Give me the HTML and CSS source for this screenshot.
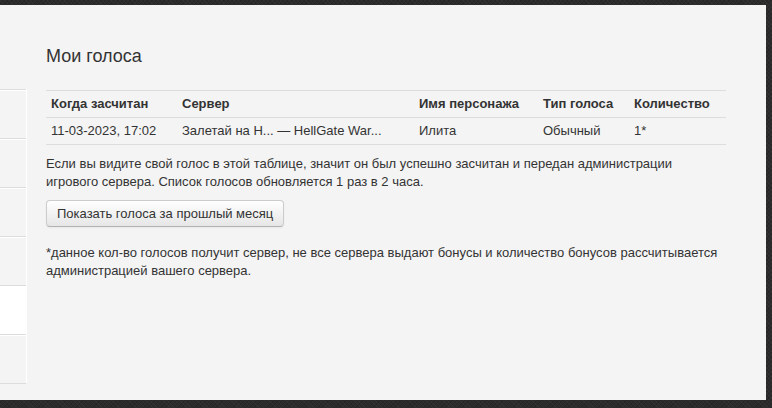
FILE: index.html
```html
<!DOCTYPE html>
<html lang="ru">
<head>
    <meta charset="UTF-8">
    <meta name="viewport" content="width=device-width, initial-scale=1.0">
    <title>Мои голоса</title>
    <link rel="stylesheet" href="styles.css">
</head>
<body>
    <div class="panel">
        <aside class="sidebar">
            <div class="side-item"></div>
            <div class="side-item"></div>
            <div class="side-item"></div>
            <div class="side-item"></div>
            <div class="side-item active"></div>
            <div class="side-item"></div>
        </aside>

        <main class="content">
            <h1>Мои голоса</h1>

            <table class="votes">
                <colgroup>
                    <col class="col-date">
                    <col class="col-server">
                    <col class="col-name">
                    <col class="col-type">
                    <col class="col-count">
                </colgroup>
                <thead>
                    <tr>
                        <th>Когда засчитан</th>
                        <th>Сервер</th>
                        <th>Имя персонажа</th>
                        <th>Тип голоса</th>
                        <th>Количество</th>
                    </tr>
                </thead>
                <tbody>
                    <tr>
                        <td>11-03-2023, 17:02</td>
                        <td>Залетай на Н... — HellGate War...</td>
                        <td>Илита</td>
                        <td>Обычный</td>
                        <td>1*</td>
                    </tr>
                </tbody>
            </table>

            <p>Если вы видите свой голос в этой таблице, значит он был успешно засчитан и передан администрации игрового сервера. Список голосов обновляется 1 раз в 2 часа.</p>

            <button class="btn">Показать голоса за прошлый месяц</button>

            <p class="note">*данное кол-во голосов получит сервер, не все сервера выдают бонусы и количество бонусов рассчитывается администрацией вашего сервера.</p>
        </main>
    </div>
</body>
</html>
```

FILE: styles.css
```css
* {
    margin: 0;
    padding: 0;
    box-sizing: border-box;
}

html, body {
    height: 100%;
}

body {
    background-color: #2b2b2b;
    background-image:
        repeating-linear-gradient(45deg, rgba(255, 255, 255, 0.03) 0 1px, transparent 1px 3px),
        repeating-linear-gradient(-45deg, rgba(0, 0, 0, 0.12) 0 1px, transparent 1px 3px);
    font-family: "Liberation Sans", Arial, sans-serif;
    font-size: 13px;
    line-height: 18px;
    color: #333;
    padding: 5px 6px 0 0;
    overflow: hidden;
}

.panel {
    display: flex;
    height: 395px;
    background-color: #f4f4f4;
}

/* left menu, mostly hidden behind the page edge */
.sidebar {
    width: 27px;
    margin-top: 84px;
    align-self: flex-start;
    border-right: 1px solid #fff;
    border-bottom: 1px solid #dcdcdc;
}

.side-item {
    height: 49px;
    border-top: 1px solid #dcdcdc;
    box-shadow: inset 0 1px 0 #fff;
}

.side-item.active {
    background-color: #fff;
}

.content {
    width: 700px;
    padding: 39px 0 0 19px;
}

h1 {
    font-size: 18px;
    line-height: 24px;
    font-weight: normal;
    color: #333;
    margin-bottom: 22px;
}

.votes {
    width: 680px;
    table-layout: fixed;
    border-collapse: collapse;
    margin-bottom: 10px;
}

.col-date { width: 131px; }
.col-server { width: 237px; }
.col-name { width: 124px; }
.col-type { width: 91px; }
.col-count { width: 97px; }

.votes th,
.votes td {
    padding: 4px 5px;
    text-align: left;
    white-space: nowrap;
    border-top: 1px solid #dddddd;
}

.votes th {
    font-weight: bold;
}

.votes tbody tr:last-child td {
    border-bottom: 1px solid #dddddd;
}

p {
    margin-bottom: 9px;
}

.btn {
    display: inline-block;
    font-family: inherit;
    font-size: 13px;
    line-height: 17px;
    color: #333;
    padding: 4px 10px;
    background-color: #f0f0f0;
    background-image: linear-gradient(to bottom, #ffffff, #e6e6e6);
    border: 1px solid #cccccc;
    border-bottom-color: #b3b3b3;
    border-radius: 4px;
    box-shadow: inset 0 1px 0 rgba(255, 255, 255, 0.2), 0 1px 2px rgba(0, 0, 0, 0.05);
    cursor: pointer;
}

.note {
    margin-top: 17px;
}
```
